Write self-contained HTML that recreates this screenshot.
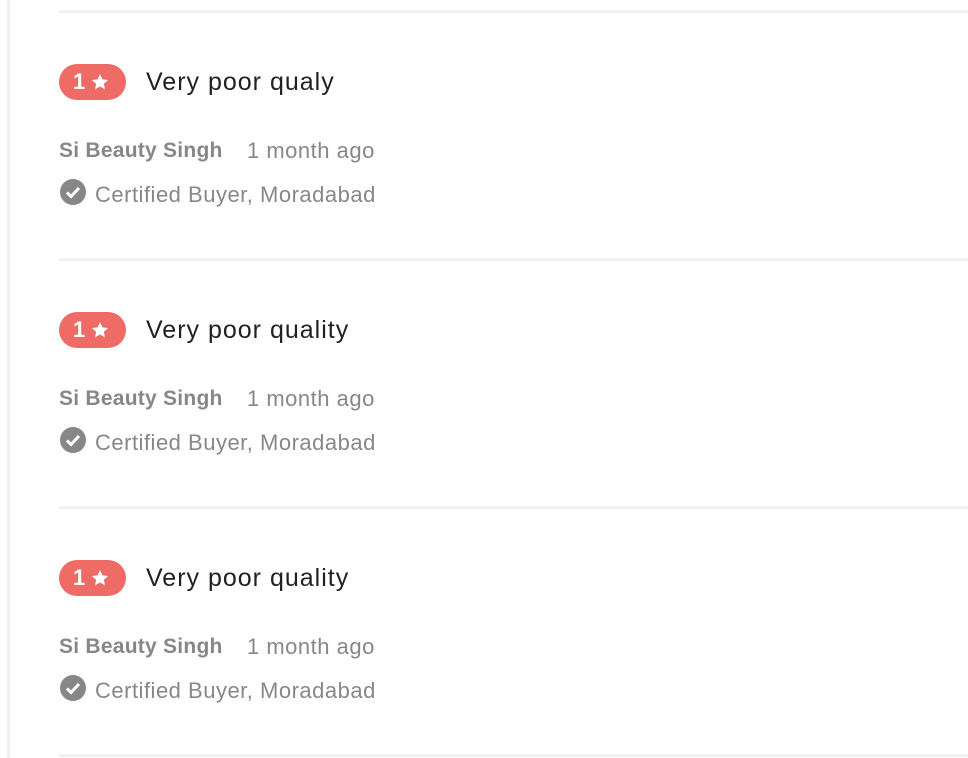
<!DOCTYPE html>
<html><head><style>
body{margin:0;width:968px;height:758px;background:#fff;font-family:"Liberation Sans",Arial,sans-serif;position:relative;overflow:hidden}
.lb{position:absolute;left:7px;top:0;width:3px;height:758px;background:#f0f0f0}
.div{position:absolute;left:59px;right:0;height:3px;background:#f0f0f0}
.badge{position:absolute;left:59px;width:67px;height:36px;border-radius:18px;background:#ee6b66;color:#fff;font-size:22px;font-weight:bold;line-height:36px}
.badge span{position:absolute;left:14px}
.badge svg{position:absolute;left:32px;top:9px}
.title{position:absolute;left:146px;font-size:25px;color:#212121;letter-spacing:1px}
.name{position:absolute;left:59px;font-size:21px;color:#878787;font-weight:bold;letter-spacing:0.25px}
.ago{position:absolute;left:247px;font-size:22px;color:#878787;letter-spacing:0.5px}
.cert{position:absolute;left:95px;font-size:22px;color:#878787;letter-spacing:0.5px}
.chk{position:absolute;left:59px}
</style></head><body>
<div class="lb"></div>
<div class="div" style="top:10px"></div>
<div class="div" style="top:258px"></div>
<div class="div" style="top:506px"></div>
<div class="div" style="top:754px"></div>

<div style="position:absolute;left:0;top:0;width:968px;height:248px">
<div class="badge" style="top:64px"><span>1</span><svg width="18" height="18" viewBox="0 0 24 24"><path fill="#fff" d="M12 1.5l3.2 7 7.6.8-5.7 5.1 1.6 7.5L12 18l-6.7 3.9 1.6-7.5L1.2 9.3l7.6-.8z"/></svg></div>
<div class="title" style="top:68px">Very poor qualy</div>
<div class="name" style="top:139px">Si Beauty Singh</div>
<div class="ago" style="top:138px">1 month ago</div>
<svg class="chk" style="top:178px" width="28" height="28" viewBox="0 0 28 28"><circle cx="14" cy="14" r="13" fill="#878787"/><path d="M8 14.5l4 4 8-8.5" stroke="#fff" stroke-width="3" fill="none"/></svg>
<div class="cert" style="top:182px">Certified Buyer, Moradabad</div>
</div>

<div style="position:absolute;left:0;top:248px;width:968px;height:248px">
<div class="badge" style="top:64px"><span>1</span><svg width="18" height="18" viewBox="0 0 24 24"><path fill="#fff" d="M12 1.5l3.2 7 7.6.8-5.7 5.1 1.6 7.5L12 18l-6.7 3.9 1.6-7.5L1.2 9.3l7.6-.8z"/></svg></div>
<div class="title" style="top:68px">Very poor quality</div>
<div class="name" style="top:139px">Si Beauty Singh</div>
<div class="ago" style="top:138px">1 month ago</div>
<svg class="chk" style="top:178px" width="28" height="28" viewBox="0 0 28 28"><circle cx="14" cy="14" r="13" fill="#878787"/><path d="M8 14.5l4 4 8-8.5" stroke="#fff" stroke-width="3" fill="none"/></svg>
<div class="cert" style="top:182px">Certified Buyer, Moradabad</div>
</div>

<div style="position:absolute;left:0;top:496px;width:968px;height:248px">
<div class="badge" style="top:64px"><span>1</span><svg width="18" height="18" viewBox="0 0 24 24"><path fill="#fff" d="M12 1.5l3.2 7 7.6.8-5.7 5.1 1.6 7.5L12 18l-6.7 3.9 1.6-7.5L1.2 9.3l7.6-.8z"/></svg></div>
<div class="title" style="top:68px">Very poor quality</div>
<div class="name" style="top:139px">Si Beauty Singh</div>
<div class="ago" style="top:138px">1 month ago</div>
<svg class="chk" style="top:178px" width="28" height="28" viewBox="0 0 28 28"><circle cx="14" cy="14" r="13" fill="#878787"/><path d="M8 14.5l4 4 8-8.5" stroke="#fff" stroke-width="3" fill="none"/></svg>
<div class="cert" style="top:182px">Certified Buyer, Moradabad</div>
</div>
</body></html>
